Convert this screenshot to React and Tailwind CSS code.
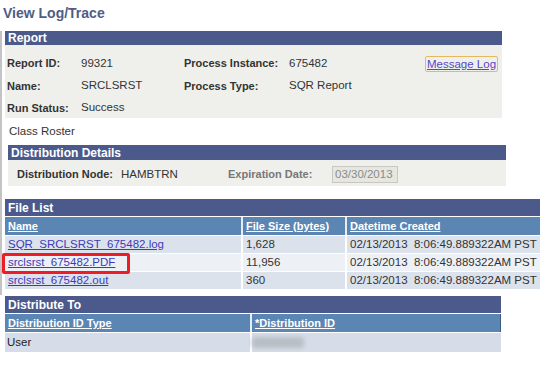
import React from 'react';

const files = [
  { name: 'SQR_SRCLSRST_675482.log', size: '1,628', bg: 'bg-[#dce2ec]' },
  { name: 'srclsrst_675482.PDF', size: '11,956', bg: 'bg-[#edf0f5]', marked: true },
  { name: 'srclsrst_675482.out', size: '360', bg: 'bg-[#dce2ec]' },
];

function Bar({ children, className = '' }) {
  return (
    <div className={`bg-[#4b5a8b] text-white font-bold text-[12px] pl-[3px] flex items-center ${className}`}>
      {children}
    </div>
  );
}

export default function App() {
  return (
    <div className="w-[540px] h-[368px] overflow-hidden bg-white text-[11.5px] text-[#333] whitespace-nowrap font-['Liberation_Sans',Arial,sans-serif]">
      <div className="h-[25px] pl-[3px] pt-[3px] text-[14px] font-bold text-[#4f5c86]">View Log/Trace</div>

      <div className="border-l-2 border-[#c4c4c4] pb-[6px]">
        {/* report */}
        <div className="ml-[3px] mt-[6px] w-[497px]">
          <Bar className="h-[14px]">Report</Bar>
          <div className="bg-[#eff0eb] h-[73px] pt-[7px] pl-[2px]">
            <div className="h-[23px] flex items-center">
              <span className="w-[74px] font-bold text-[11px]">Report ID:</span>
              <span className="w-[103px]">99321</span>
              <span className="w-[105px] font-bold text-[11px]">Process Instance:</span>
              <span className="w-[136px]">675482</span>
              <a className="border border-[#e8b860] rounded-[2px] px-[1px] leading-[14px] text-[#5646c8] underline">Message Log</a>
            </div>
            <div className="h-[22px] flex items-center">
              <span className="w-[74px] font-bold text-[11px]">Name:</span>
              <span className="w-[103px]">SRCLSRST</span>
              <span className="w-[105px] font-bold text-[11px]">Process Type:</span>
              <span>SQR Report</span>
            </div>
            <div className="h-[22px] flex items-center">
              <span className="w-[74px] font-bold text-[11px]">Run Status:</span>
              <span>Success</span>
            </div>
          </div>
        </div>

        <div className="h-[27px] pl-[7px] pt-[1px] flex items-center">Class Roster</div>

        {/* distribution details */}
        <div className="ml-[6px] w-[498px]">
          <Bar className="h-[15px]">Distribution Details</Bar>
          <div className="bg-[#eff0eb] h-[26px] flex items-center pl-[9px] pt-[3px]">
            <span className="w-[104px] font-bold text-[11px]">Distribution Node:</span>
            <span className="w-[107px]">HAMBTRN</span>
            <span className="w-[104px] font-bold text-[11px] text-[#777]">Expiration Date:</span>
            <span className="w-[66px] h-[17px] border border-[#c8c8c0] bg-[#e7e7e1] text-[#8a8a8a] pl-[2px] flex items-center">03/30/2013</span>
          </div>
        </div>

        {/* file list */}
        <div className="ml-[3px] mt-[13px] w-[540px]">
          <Bar className="h-[17px]">File List</Bar>
          <div className="flex h-[18px] mt-[1px] bg-[#5b86b4] text-white font-bold text-[11px] underline">
            <div className="w-[236px] pl-[3px] flex items-center">Name</div>
            <div className="w-[104px] pl-[3px] border-l-2 border-[#e6ecf3] flex items-center">File Size (bytes)</div>
            <div className="flex-1 pl-[3px] border-l-2 border-[#e6ecf3] flex items-center">Datetime Created</div>
          </div>
          {files.map((f) => (
            <div key={f.name} className={`flex h-[18px] border-t border-white ${f.bg}`}>
              <div className="w-[236px] pl-[3px] flex items-center relative">
                <a className="text-[#3d3cb8] underline">{f.name}</a>
                {f.marked && (
                  <div className="absolute left-[-3px] top-[-1px] w-[128px] h-[21px] border-[3px] border-[#ee1c24] rounded-[2px]" />
                )}
              </div>
              <div className="w-[104px] pl-[3px] border-l-2 border-white flex items-center">{f.size}</div>
              <div className="flex-1 pl-[3px] border-l-2 border-white flex items-center whitespace-pre">02/13/2013  8:06:49.889322AM PST</div>
            </div>
          ))}
        </div>
      </div>

      {/* distribute to */}
      <div className="ml-[5px] mt-[1px] w-[496px]">
        <Bar className="h-[17px]">Distribute To</Bar>
        <div className="flex h-[18px] mt-[1px] bg-[#5b86b4] text-white font-bold text-[11px] underline border-r border-[#3d5a80]">
          <div className="w-[245px] pl-[3px] flex items-center">Distribution ID Type</div>
          <div className="flex-1 pl-[3px] border-l-2 border-[#e6ecf3] flex items-center">*Distribution ID</div>
        </div>
        <div className="flex h-[20px] bg-[#d6dde8] border-t border-white">
          <div className="w-[245px] pl-[2px] flex items-center text-[#222]">User</div>
          <div className="flex-1 border-l-2 border-white flex items-center">
            <div className="w-[52px] h-[11px] bg-[#b9bec6] blur-[2px] rounded-sm" />
          </div>
        </div>
      </div>
    </div>
  );
}
